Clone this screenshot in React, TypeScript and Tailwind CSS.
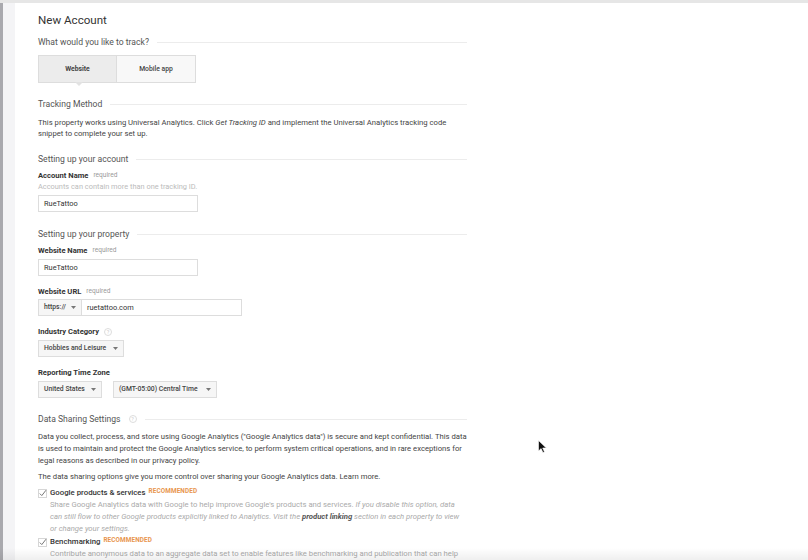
import React from "react"

function Heading({ children, help }: { children: React.ReactNode; help?: boolean }) {
  return (
    <div className="flex items-center gap-2 h-[14px]">
      <span className="text-[8.6px] leading-[14px] text-[#555] whitespace-nowrap">{children}</span>
      {help && <Help />}
      <div className="flex-1 h-px bg-[#ececec]" />
    </div>
  )
}

function Help() {
  return (
    <span className="w-[8px] h-[8px] rounded-full border border-[#ddd] text-[5.5px] leading-[6px] text-[#ccc] flex items-center justify-center">
      ?
    </span>
  )
}

function Caret() {
  return (
    <svg width="5" height="3" viewBox="0 0 5 3" className="shrink-0">
      <path d="M0 0h5L2.5 3z" fill="#777" />
    </svg>
  )
}

function Select({ label, className }: { label: string; className: string }) {
  return (
    <div
      className={`h-[17px] flex items-center justify-between px-[5px] border border-[#ddd] bg-[#f6f6f6] text-[6.8px] font-medium text-[#444] ${className}`}
    >
      <span>{label}</span>
      <Caret />
    </div>
  )
}

function Label({ name, req, help }: { name: string; req?: boolean; help?: boolean }) {
  return (
    <div className="flex items-center gap-[5px] h-[11px]">
      <span className="text-[7.6px] font-bold text-[#333] leading-[11px]">{name}</span>
      {req && <span className="text-[6.6px] text-[#999] leading-[11px]">required</span>}
      {help && <Help />}
    </div>
  )
}

function Check() {
  return (
    <svg width="9" height="9" viewBox="0 0 9 9" className="shrink-0 mt-[2px]">
      <rect x="0.5" y="0.5" width="8" height="8" fill="#fff" stroke="#d6d6d6" />
      <path d="M1.8 4.6l2 2L8 1.2" fill="none" stroke="#777" strokeWidth="1" />
    </svg>
  )
}

function Rec() {
  return (
    <span className="text-[6.4px] font-bold tracking-[0.1px] text-[#e8954e] self-start leading-[8px]">
      RECOMMENDED
    </span>
  )
}

function TextInput({ value, className }: { value: string; className: string }) {
  return (
    <div className={`h-[17px] border border-[#ddd] flex items-center px-[5px] text-[7.4px] text-[#333] ${className}`}>
      {value}
    </div>
  )
}

export default function App() {
  return (
    <div className="relative w-[808px] h-[560px] overflow-hidden bg-white font-['Roboto',sans-serif]">
      <div className="h-[3px] bg-[#e6e6e6]" />
      <div className="flex h-full">
        <div className="w-[3px] bg-[#a9a9ae]" />
        <div className="w-[12px] bg-[#f4f4f6]" />
        <div className="ml-[23px] w-[429px]">
          <h1 className="mt-[7px] text-[11.6px] leading-[20px] text-[#333]">New Account</h1>

          <div className="mt-[5px]">
            <Heading>What would you like to track?</Heading>
          </div>

          <div className="mt-[6px] flex">
            <div className="relative w-[79px] h-[28px] border border-[#ddd] bg-[#ececec] flex items-center justify-center text-[6.8px] font-bold text-[#444]">
              Website
              <span className="absolute left-[36px] -bottom-[4px] w-0 h-0 border-l-[4px] border-r-[4px] border-t-[4px] border-l-transparent border-r-transparent border-t-[#e2e2e2]" />
            </div>
            <div className="w-[79px] h-[28px] border border-l-0 border-[#ddd] bg-[#f8f8f8] flex items-center justify-center text-[6.8px] font-medium text-[#444]">
              Mobile app
            </div>
          </div>

          <div className="mt-[14px]">
            <Heading>Tracking Method</Heading>
          </div>
          <p className="mt-[6px] text-[7.7px] leading-[11px] text-[#444]">
            This property works using Universal Analytics. Click <i>Get Tracking ID</i> and implement the Universal
            Analytics tracking code
            <br />
            snippet to complete your set up.
          </p>

          <div className="mt-[13px]">
            <Heading>Setting up your account</Heading>
          </div>
          <div className="mt-[4px]">
            <Label name="Account Name" req />
          </div>
          <div className="text-[7.4px] leading-[11px] text-[#bbb]">Accounts can contain more than one tracking ID.</div>
          <TextInput value="RueTattoo" className="mt-[3px] w-[160px]" />

          <div className="mt-[15px]">
            <Heading>Setting up your property</Heading>
          </div>
          <div className="mt-[4px]">
            <Label name="Website Name" req />
          </div>
          <TextInput value="RueTattoo" className="mt-[3px] w-[160px]" />

          <div className="mt-[10px]">
            <Label name="Website URL" req />
          </div>
          <div className="mt-[2px] flex">
            <Select label="https://" className="w-[44px]" />
            <TextInput value="ruetattoo.com" className="w-[160px] border-l-0" />
          </div>

          <div className="mt-[10px]">
            <Label name="Industry Category" help />
          </div>
          <div className="mt-[3px] flex">
            <Select label="Hobbies and Leisure" className="w-[86px]" />
          </div>

          <div className="mt-[10px]">
            <Label name="Reporting Time Zone" />
          </div>
          <div className="mt-[3px] flex gap-[11px]">
            <Select label="United States" className="w-[64px]" />
            <Select label="(GMT-05:00) Central Time" className="w-[104px]" />
          </div>

          <div className="mt-[14px]">
            <Heading help>Data Sharing Settings</Heading>
          </div>
          <p className="mt-[5px] text-[7.7px] leading-[12px] text-[#444]">
            Data you collect, process, and store using Google Analytics ("Google Analytics data") is secure and kept
            confidential. This data
            <br />
            is used to maintain and protect the Google Analytics service, to perform system critical operations, and in
            rare exceptions for
            <br />
            legal reasons as described in our privacy policy.
          </p>
          <p className="mt-[4px] text-[7.7px] leading-[12px] text-[#444]">
            The data sharing options give you more control over sharing your Google Analytics data. Learn more.
          </p>

          <div className="mt-[4px] flex gap-[3px]">
            <Check />
            <div>
              <div className="flex items-center gap-[3px] h-[12px]">
                <span className="text-[7.8px] font-medium text-[#333] leading-[12px]">Google products &amp; services</span>
                <Rec />
              </div>
              <p className="text-[7.7px] leading-[12px] text-[#aaa]">
                Share Google Analytics data with Google to help improve Google's products and services.{" "}
                <i>If you disable this option, data</i>
                <br />
                <i>
                  can still flow to other Google products explicitly linked to Analytics. Visit the{" "}
                  <b className="text-[#555]">product linking</b> section in each property to view
                </i>
                <br />
                <i>or change your settings.</i>
              </p>
            </div>
          </div>

          <div className="mt-[1px] flex gap-[3px]">
            <Check />
            <div>
              <div className="flex items-center gap-[3px] h-[12px]">
                <span className="text-[7.8px] font-medium text-[#333] leading-[12px]">Benchmarking</span>
                <Rec />
              </div>
              <p className="text-[7.7px] leading-[12px] text-[#aaa]">
                Contribute anonymous data to an aggregate data set to enable features like benchmarking and publication
                that can help
                <br />
                everyone understand data trends. All identifiable information about your website is removed and
                combined with other
              </p>
            </div>
          </div>
        </div>
      </div>

      <svg className="absolute left-[538px] top-[440px]" width="9" height="13" viewBox="0 0 9 13">
        <path d="M0.5 0.5v10.5l2.6-2.4 1.8 4 1.6-0.7-1.8-3.9h3.6z" fill="#111" stroke="#fff" strokeWidth="0.6" />
      </svg>
      <div className="absolute left-0 right-0 bottom-0 h-[12px] bg-gradient-to-b from-transparent to-[#00000010]" />
    </div>
  )
}
